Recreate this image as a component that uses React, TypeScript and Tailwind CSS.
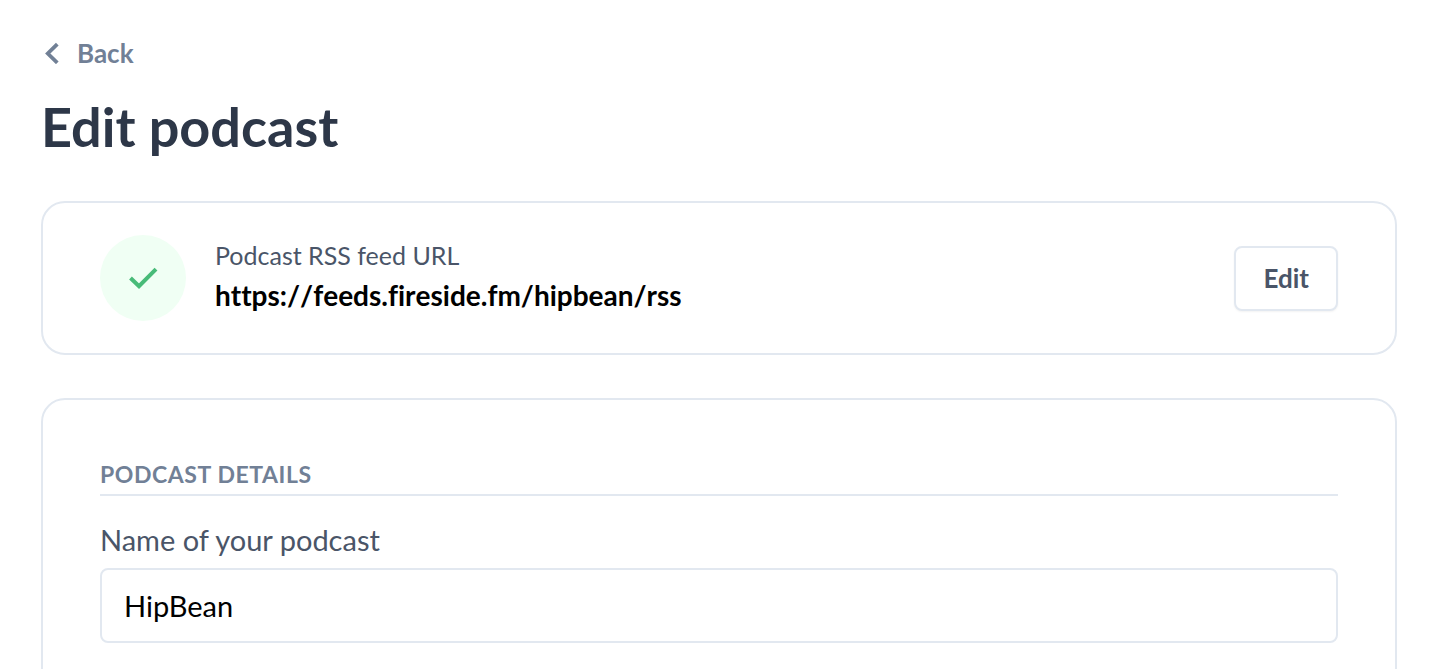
import { useState } from "react";

function ChevronLeft() {
  return (
    <svg width="14" height="22" viewBox="0 0 14 22" fill="none" stroke="currentColor" strokeWidth="3.8" aria-hidden="true">
      <path d="M12.3 2.2 2.8 11.5l9.5 9.3" />
    </svg>
  );
}

function CheckBadge() {
  return (
    <div className="flex size-[86px] shrink-0 items-center justify-center rounded-full bg-[#f0fff4] text-[#48bb78]">
      <svg width="30" height="22" viewBox="0 0 30 22" fill="none" stroke="currentColor" strokeWidth="4" aria-hidden="true">
        <path d="M2.5 11 11 19.2 28 2.2" />
      </svg>
    </div>
  );
}

function FeedCard() {
  return (
    <section className="flex items-center rounded-3xl border-2 border-[#e2e8f0] px-[57px] py-8">
      <CheckBadge />
      <div className="ml-[29px] min-w-0 flex-1 pb-1.5">
        <p className="text-[25px] leading-10 text-[#4a5568]">Podcast RSS feed URL</p>
        <p className="truncate text-[28px] leading-10 font-bold text-black [font-kerning:none]">https://feeds.fireside.fm/hipbean/rss</p>
      </div>
      <button
        type="button"
        className="h-[65px] shrink-0 rounded-lg border-2 border-[#e2e8f0] bg-white px-[27px] text-[26px] font-bold text-[#4a5568] shadow-xs"
      >
        Edit
      </button>
    </section>
  );
}

function DetailsCard() {
  const [name, setName] = useState("HipBean");
  return (
    <section className="rounded-3xl border-2 border-[#e2e8f0] px-[57px] pt-[57px] pb-14">
      <h2 className="border-b-2 border-[#e2e8f0] pb-0.5 text-[23px] leading-[35px] font-bold tracking-wide text-[#718096] uppercase">
        Podcast details
      </h2>
      <label htmlFor="podcast-name" className="mt-6 block text-[29px] leading-10 text-[#4a5568]">
        Name of your podcast
      </label>
      <input
        id="podcast-name"
        type="text"
        value={name}
        onChange={(e) => setName(e.target.value)}
        className="mt-2 block h-[75px] w-full rounded-lg border-2 border-[#e2e8f0] bg-white px-[22px] text-[29px] text-black"
      />
    </section>
  );
}

export default function App() {
  return (
    <main className="h-screen overflow-hidden bg-white pt-[35px] pr-[43px] pl-[41px] font-['Lato',sans-serif] [font-variant-ligatures:none]">
      <a href="#" className="inline-flex items-center gap-[18px] pl-1 align-top text-[26px] leading-9 font-bold text-[#718096]">
        <ChevronLeft />
        Back
      </a>
      <h1 className="mt-5 text-[54px] leading-[72px] font-bold text-[#2d3748]">Edit podcast</h1>
      <div className="mt-[38px] flex flex-col gap-[43px]">
        <FeedCard />
        <DetailsCard />
      </div>
    </main>
  );
}
